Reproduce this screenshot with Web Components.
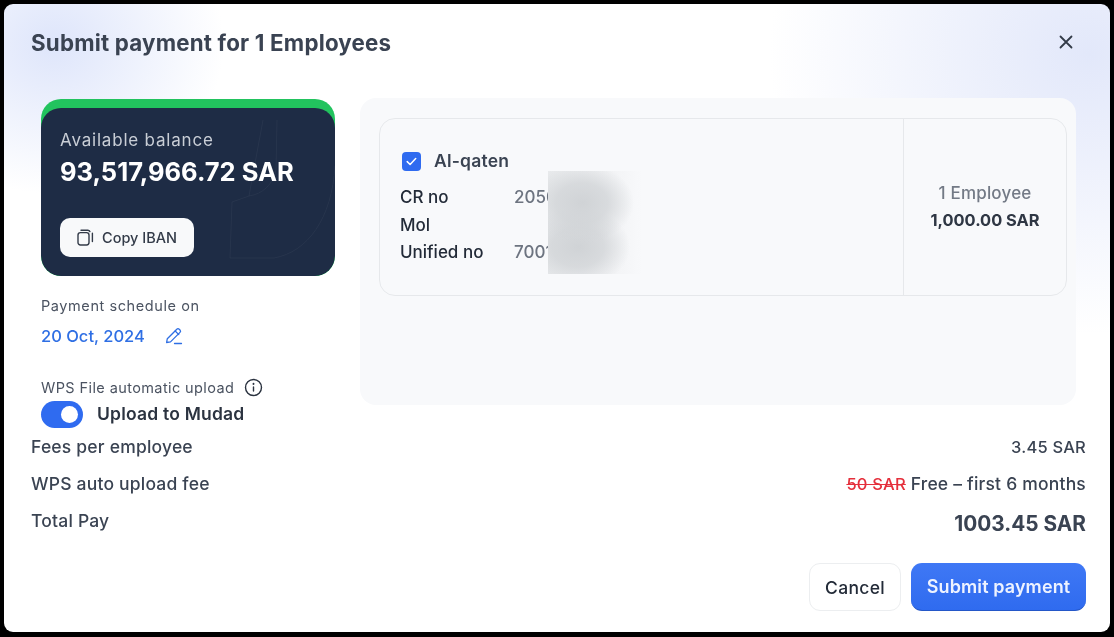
<!DOCTYPE html>
<html>
<head>
<meta charset="utf-8">
<title>Submit payment</title>
<style>
  html, body { margin: 0; height: 100%; background: #000; }
  body { font-family: Inter, "Liberation Sans", sans-serif; }
</style>
</head>
<body>
<pay-dialog>
  <span slot="title">Submit payment for 1 Employees</span>
  <balance-card slot="left" amount="93,517,966.72 SAR"></balance-card>
  <schedule-info slot="left" date="20 Oct, 2024"></schedule-info>
  <wps-upload slot="left"></wps-upload>
  <company-card slot="panel" name="Al-qaten" cr="2050" unified="7001" count="1 Employee" total="1,000.00 SAR"></company-card>
  <fee-row slot="fees" label="Fees per employee"><span style="font-size:16.5px">3.45 SAR</span></fee-row>
  <fee-row slot="fees" label="WPS auto upload fee"><s style="color:#e5303c;font-size:16.5px">50 SAR</s> <span>Free – first 6 months</span></fee-row>
  <fee-row slot="fees" label="Total Pay" big><span>1003.45 SAR</span></fee-row>
  <app-button slot="actions">Cancel</app-button>
  <app-button slot="actions" primary>Submit payment</app-button>
</pay-dialog>

<script>
class PayDialog extends HTMLElement {
  constructor() {
    super();
    this.attachShadow({ mode: 'open' });
    this.shadowRoot.innerHTML = `
      <style>
        :host {
          display: block;
          box-sizing: border-box;
          width: 1106px;
          height: 628px;
          margin: 4px 0 0 4px;
          padding: 0 24px 0 27px;
          border-radius: 9px;
          overflow: hidden;
          color: #3a4352;
          filter: blur(.3px);
          background:
            radial-gradient(ellipse 170px 150px at 50px 40px, rgba(200,212,248,.6), rgba(200,212,248,0) 100%),
            radial-gradient(ellipse 320px 280px at 1085px 50px, rgba(214,222,248,.7), rgba(214,222,248,0) 100%),
            #fff;
        }
        header {
          display: flex;
          justify-content: space-between;
          align-items: center;
          height: 76px;
        }
        h1 { margin: 0; font-size: 22.3px; font-weight: 700; letter-spacing: .2px; }
        .close { display: flex; margin-right: 13px; }
        .top {
          display: flex;
          align-items: flex-start;
          gap: 25px;
          margin: 18px 0 0 10px;
        }
        .left { width: 294px; flex: none; padding-top: 1px; }
        .panel {
          width: 716px;
          height: 307px;
          box-sizing: border-box;
          padding: 20px 9px 0 19px;
          background: #f8f9fb;
          border-radius: 16px;
        }
        .actions {
          display: flex;
          justify-content: flex-end;
          gap: 10px;
          margin: 24px 0 0 0;
        }
      </style>
      <header>
        <h1><slot name="title"></slot></h1>
        <span class="close">
          <svg width="14" height="14" viewBox="0 0 14 14" fill="none" stroke="#333b48" stroke-width="1.8" stroke-linecap="round"><path d="M1.5 1.5l11 11M12.5 1.5l-11 11"/></svg>
        </span>
      </header>
      <div class="top">
        <div class="left"><slot name="left"></slot></div>
        <div class="panel"><slot name="panel"></slot></div>
      </div>
      <slot name="fees"></slot>
      <div class="actions"><slot name="actions"></slot></div>
    `;
  }
}

class BalanceCard extends HTMLElement {
  constructor() {
    super();
    this.attachShadow({ mode: 'open' });
    this.shadowRoot.innerHTML = `
      <style>
        :host {
          display: block;
          position: relative;
          height: 177px;
          box-sizing: border-box;
          padding: 9px 0 0;
          background: #22c35e;
          border-radius: 20px;
          overflow: hidden;
        }
        .body {
          position: relative;
          height: 168px;
          box-sizing: border-box;
          padding: 22px 19px 0;
          background: #1e2c45;
          border-radius: 20px;
          overflow: hidden;
        }
        svg.bg { position: absolute; left: 0; top: 0; }
        .label { position: relative; font-size: 17px; line-height: 20px; color: #c9ced6; letter-spacing: .8px; white-space: nowrap; }
        .amount { position: relative; margin-top: 2px; font-size: 25.5px; line-height: 40px; font-weight: 700; color: #fff; white-space: nowrap; }
        button {
          position: relative;
          display: flex;
          align-items: center;
          gap: 8px;
          width: 134px;
          height: 39px;
          margin-top: 26px;
          padding: 0 0 0 17px;
          border: 0;
          border-radius: 10px;
          background: #f8f9fa;
          color: #333b48;
          font: 500 14.5px Inter, "Liberation Sans", sans-serif;
          white-space: nowrap;
        }
      </style>
      <div class="body">
        <svg class="bg" width="294" height="168" viewBox="0 0 294 168" fill="none" stroke="#fff" stroke-opacity=".045">
          <path d="M222 12l-14 76-17 6-2 56h44c34-6 58-40 61-92"/>
          <path d="M208 88c14-2 24-12 27-26l1-50"/>
        </svg>
        <div class="label">Available balance</div>
        <div class="amount"></div>
        <button>
          <svg width="17" height="17" viewBox="0 0 17 17" fill="none" stroke="#333b48" stroke-width="1.4"><rect x="1" y="3.6" width="11" height="12.4" rx="2.4"/><path d="M4 1.2h6.5a2.4 2.4 0 0 1 2.4 1.4M15.4 4.2v8.4" stroke-linecap="round"/></svg>
          Copy IBAN
        </button>
      </div>
    `;
  }
  connectedCallback() {
    this.shadowRoot.querySelector('.amount').textContent = this.getAttribute('amount');
  }
}

class ScheduleInfo extends HTMLElement {
  constructor() {
    super();
    this.attachShadow({ mode: 'open' });
    this.shadowRoot.innerHTML = `
      <style>
        :host { display: block; padding-top: 20px; }
        .label { font-size: 14.5px; line-height: 20px; color: #4b5361; letter-spacing: .58px; white-space: nowrap; }
        .date {
          display: flex;
          align-items: center;
          gap: 20px;
          margin-top: 10px;
          font-size: 16.5px;
          line-height: 20px;
          font-weight: 500;
          color: #2f6fe4;
        }
      </style>
      <div class="label">Payment schedule on</div>
      <div class="date">
        <span></span>
        <svg width="18" height="18" viewBox="0 0 18 18" fill="none" stroke="#2f6fe4" stroke-width="1.3" stroke-linecap="round" stroke-linejoin="round"><path d="M1.6 15.5l.7-3.8L11.8 2.2a1.7 1.7 0 0 1 2.4 0l.8.8a1.7 1.7 0 0 1 0 2.4L5.5 14.9z"/><path d="M10.2 4l3.6 3.6M9.5 16.5h7"/></svg>
      </div>
    `;
  }
  connectedCallback() {
    this.shadowRoot.querySelector('.date span').textContent = this.getAttribute('date');
  }
}

class WpsUpload extends HTMLElement {
  constructor() {
    super();
    this.attachShadow({ mode: 'open' });
    this.shadowRoot.innerHTML = `
      <style>
        :host { display: block; padding-top: 31px; }
        .label {
          display: flex;
          align-items: center;
          gap: 10px;
          height: 20px;
          font-size: 14.5px;
          color: #4b5361;
          letter-spacing: .4px;
          white-space: nowrap;
        }
        .row { display: flex; align-items: center; gap: 14px; margin-top: 4px; }
        .switch {
          position: relative;
          width: 42px;
          height: 27px;
          border-radius: 14px;
          background: #2f6bf0;
        }
        .knob {
          position: absolute;
          right: 5px;
          top: 5px;
          width: 17px;
          height: 17px;
          border-radius: 50%;
          background: #fff;
        }
        .text { padding-bottom: 3px; font-size: 17.5px; font-weight: 600; letter-spacing: .2px; color: #2b3340; white-space: nowrap; }
      </style>
      <div class="label">
        <span>WPS File automatic upload</span>
        <svg width="19" height="19" viewBox="0 0 19 19" fill="none" stroke="#2b3340" stroke-width="1.4" stroke-linecap="round"><circle cx="9.5" cy="9.5" r="8"/><path d="M9.5 9v4"/><path d="M9.5 5.8v.2" stroke-width="1.9"/></svg>
      </div>
      <div class="row">
        <span class="switch"><span class="knob"></span></span>
        <span class="text">Upload to Mudad</span>
      </div>
    `;
  }
}

class CompanyCard extends HTMLElement {
  constructor() {
    super();
    this.attachShadow({ mode: 'open' });
    this.shadowRoot.innerHTML = `
      <style>
        :host {
          display: flex;
          position: relative;
          box-sizing: border-box;
          height: 178px;
          border: 1.5px solid #e6e8eb;
          border-radius: 16px;
          color: #232b38;
        }
        .info { flex: 1; padding: 32px 0 0 20px; border-right: 1.5px solid #e6e8eb; }
        .name { display: flex; align-items: center; gap: 13px; margin-left: 2px; font-size: 17.5px; letter-spacing: .2px; font-weight: 600; color: #3a4352; line-height: 20px; }
        .check { display: flex; align-items: center; justify-content: center; width: 19px; height: 19px; border-radius: 4px; background: #2f6bf0; }
        dl {
          display: grid;
          grid-template-columns: 114px 1fr;
          grid-auto-rows: 27.5px;
          align-items: center;
          margin: 12.5px 0 0;
          font-size: 17px;
          font-weight: 500;
        }
        dd { margin: 0; color: #6d7480; }
        .summary {
          width: 162px;
          display: flex;
          flex-direction: column;
          align-items: center;
          padding-top: 62px;
          box-sizing: border-box;
        }
        .count { font-size: 17px; letter-spacing: .2px; line-height: 24px; color: #737a86; font-weight: 500; white-space: nowrap; }
        .total { margin-top: 3px; font-size: 16.4px; line-height: 24px; font-weight: 700; color: #2f3744; white-space: nowrap; }
        .mask {
          position: absolute;
          left: 168px;
          top: 52px;
          width: 94px;
          height: 103px;
          background:
            radial-gradient(ellipse 52px 40px at 34px 32px, #d0d3d6 0, rgba(208,211,214,.75) 50%, rgba(208,211,214,0) 100%),
            radial-gradient(ellipse 52px 40px at 30px 76px, #d0d3d6 0, rgba(208,211,214,.75) 50%, rgba(208,211,214,0) 100%),
            linear-gradient(90deg, #e8eaec 0, #f1f2f4 60%, rgba(248,249,251,0) 100%);
        }
      </style>
      <div class="info">
        <div class="name">
          <span class="check"><svg width="11" height="9" viewBox="0 0 11 9" fill="none" stroke="#fff" stroke-width="1.5" stroke-linecap="round" stroke-linejoin="round"><path d="M1.2 4.6l2.9 2.9 5.6-6"/></svg></span>
          <span class="nm"></span>
        </div>
        <dl>
          <dt>CR no</dt><dd class="cr"></dd>
          <dt>Mol</dt><dd></dd>
          <dt>Unified no</dt><dd class="un"></dd>
        </dl>
      </div>
      <div class="summary">
        <div class="count"></div>
        <div class="total"></div>
      </div>
      <div class="mask"></div>
    `;
  }
  connectedCallback() {
    const root = this.shadowRoot;
    root.querySelector('.nm').textContent = this.getAttribute('name');
    root.querySelector('.cr').textContent = this.getAttribute('cr');
    root.querySelector('.un').textContent = this.getAttribute('unified');
    root.querySelector('.count').textContent = this.getAttribute('count');
    root.querySelector('.total').textContent = this.getAttribute('total');
  }
}

class FeeRow extends HTMLElement {
  constructor() {
    super();
    this.attachShadow({ mode: 'open' });
    this.shadowRoot.innerHTML = `
      <style>
        :host {
          display: flex;
          justify-content: space-between;
          align-items: flex-start;
          height: 37px;
          font-size: 17.5px;
          line-height: 37px;
          font-weight: 500;
          letter-spacing: .2px;
          color: #3a4352;
        }
        :host([big]) .value { font-size: 20.8px; line-height: 43px; font-weight: 700; letter-spacing: 0; }
      </style>
      <span class="label"></span>
      <span class="value"><slot></slot></span>
    `;
  }
  connectedCallback() {
    this.shadowRoot.querySelector('.label').textContent = this.getAttribute('label');
  }
}

class AppButton extends HTMLElement {
  constructor() {
    super();
    this.attachShadow({ mode: 'open' });
    this.shadowRoot.innerHTML = `
      <style>
        :host {
          display: flex;
          align-items: center;
          justify-content: center;
          box-sizing: border-box;
          width: 92px;
          height: 48px;
          border: 1.5px solid #eceef0;
          border-radius: 11px;
          background: #fff;
          color: #232b38;
          font-size: 17.5px;
          letter-spacing: .3px;
          font-weight: 500;
          white-space: nowrap;
        }
        :host([primary]) {
          width: 175px;
          border: 0;
          border-bottom: 1.5px solid #2457c8;
          background: linear-gradient(180deg, #3f78f5, #2f6bef);
          color: #eef3ff;
          font-size: 18px;
          letter-spacing: .1px;
          font-weight: 600;
        }
      </style>
      <slot></slot>
    `;
  }
}

customElements.define('pay-dialog', PayDialog);
customElements.define('balance-card', BalanceCard);
customElements.define('schedule-info', ScheduleInfo);
customElements.define('wps-upload', WpsUpload);
customElements.define('company-card', CompanyCard);
customElements.define('fee-row', FeeRow);
customElements.define('app-button', AppButton);
</script>
</body>
</html>
